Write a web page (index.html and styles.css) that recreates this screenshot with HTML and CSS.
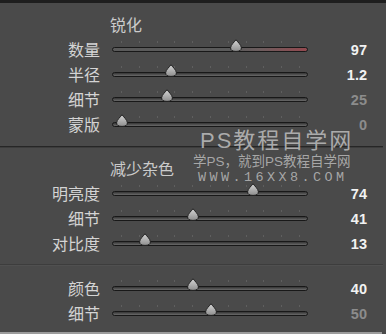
FILE: index.html
```html
<!DOCTYPE html>
<html lang="zh">
<head>
<meta charset="utf-8">
<title>Detail</title>
<link rel="stylesheet" href="styles.css">
</head>
<body>
<div class="panel">
  <div class="topbar"></div>

  <section class="group group-sharpen">
    <div class="heading">锐化</div>
    <div class="row">
      <span class="label">数量</span>
      <div class="track track-red"><svg class="thumb" style="left:63.3%" viewBox="0 0 12 13"><use href="#knob"/></svg></div>
      <span class="value">97</span>
    </div>
    <div class="row">
      <span class="label">半径</span>
      <div class="track"><svg class="thumb" style="left:30.1%" viewBox="0 0 12 13"><use href="#knob"/></svg></div>
      <span class="value">1.2</span>
    </div>
    <div class="row">
      <span class="label">细节</span>
      <div class="track"><svg class="thumb" style="left:27.6%" viewBox="0 0 12 13"><use href="#knob"/></svg></div>
      <span class="value dim">25</span>
    </div>
    <div class="row">
      <span class="label">蒙版</span>
      <div class="track"><svg class="thumb" style="left:4.6%" viewBox="0 0 12 13"><use href="#knob"/></svg></div>
      <span class="value dim">0</span>
    </div>
  </section>

  <div class="divider divider-strong"></div>

  <section class="group group-noise">
    <div class="heading">减少杂色</div>
    <div class="row">
      <span class="label">明亮度</span>
      <div class="track"><svg class="thumb" style="left:72.4%" viewBox="0 0 12 13"><use href="#knob"/></svg></div>
      <span class="value">74</span>
    </div>
    <div class="row">
      <span class="label">细节</span>
      <div class="track"><svg class="thumb" style="left:41.3%" viewBox="0 0 12 13"><use href="#knob"/></svg></div>
      <span class="value">41</span>
    </div>
    <div class="row">
      <span class="label">对比度</span>
      <div class="track"><svg class="thumb" style="left:16.3%" viewBox="0 0 12 13"><use href="#knob"/></svg></div>
      <span class="value">13</span>
    </div>
  </section>

  <div class="divider divider-soft"></div>

  <section class="group group-color">
    <div class="row">
      <span class="label">颜色</span>
      <div class="track"><svg class="thumb" style="left:41.3%" viewBox="0 0 12 13"><use href="#knob"/></svg></div>
      <span class="value">40</span>
    </div>
    <div class="row">
      <span class="label">细节</span>
      <div class="track"><svg class="thumb" style="left:50.5%" viewBox="0 0 12 13"><use href="#knob"/></svg></div>
      <span class="value dim">50</span>
    </div>
  </section>

  <div class="bottombar"></div>

  <div class="watermark">
    <div class="wm-title">PS教程自学网</div>
    <div class="wm-sub">学PS，就到PS教程自学网</div>
    <div class="wm-url">WWW.16XX8.COM</div>
  </div>

  <svg class="defs" width="0" height="0" aria-hidden="true">
    <defs>
      <linearGradient id="knobfill" x1="0" y1="0" x2="0" y2="1">
        <stop offset="0" stop-color="#d6d6d6"/>
        <stop offset="1" stop-color="#8e8e8e"/>
      </linearGradient>
      <path id="knob" d="M6 0.6 C7 2.6 11.4 5.8 11.4 8.8 C11.4 11.4 9.4 12.4 6 12.4 C2.6 12.4 0.6 11.4 0.6 8.8 C0.6 5.8 5 2.6 6 0.6 Z" fill="url(#knobfill)" stroke="#1c1c1c" stroke-width="1"/>
    </defs>
  </svg>
</div>
</body>
</html>
```

FILE: styles.css
```css
html, body {
  margin: 0;
  padding: 0;
  background: #4a4a4a;
}

.panel {
  position: relative;
  width: 386px;
  height: 334px;
  overflow: hidden;
  background: #4a4a4a;
  font-family: "Noto Sans CJK SC", "Noto Sans", sans-serif;
}

.topbar {
  height: 3px;
  background: #1e1e1e;
}

.group {
  display: flex;
  flex-direction: column;
}

.group-sharpen { padding: 8px 0 9px; }
.group-noise { padding: 7px 0 8px; }
.group-color { padding: 10px 0 6px; }

.heading {
  height: 26px;
  line-height: 26px;
  padding-left: 110px;
  font-size: 16px;
  color: #cbcbcb;
}

.row {
  display: flex;
  align-items: center;
  height: 25px;
}

.label {
  width: 100px;
  text-align: right;
  font-size: 16px;
  line-height: 25px;
  color: #d4d4d4;
}

.track {
  position: relative;
  margin-left: 12px;
  width: 194px;
  height: 3px;
  border: 1px solid #181818;
  border-radius: 3px;
  background: linear-gradient(#343434, #6a6a6a);
}

.track::before {
  content: "";
  position: absolute;
  left: 8px;
  top: -7px;
  width: 179px;
  height: 2px;
  background: repeating-linear-gradient(to right, #5f5f5f 0 1px, transparent 1px 17.8px);
}

.track-red {
  background: linear-gradient(to right, #5a5a5a 0, #5a5a5a 63%, #6c5c5d 76%, #93494f 100%);
}

.thumb {
  position: absolute;
  top: -9px;
  width: 12px;
  height: 13px;
  transform: translateX(-50%);
  overflow: visible;
}

.value {
  width: 59px;
  text-align: right;
  font-family: "Liberation Sans", Arial, sans-serif;
  font-weight: bold;
  font-size: 14.5px;
  color: #f2f2f2;
}

.value.dim {
  color: #8c8c8c;
}

.divider {
  width: 383px;
}

.divider-strong {
  height: 1px;
  background: #262626;
  border-bottom: 1px solid #3c3c3c;
}

.divider-soft {
  height: 1px;
  background: #3d3d3d;
  border-bottom: 1px solid #505050;
}

.bottombar {
  width: 382px;
  height: 3px;
  background: #9c9c9c;
}

.watermark {
  position: absolute;
  left: 193px;
  top: 128px;
  display: flex;
  flex-direction: column;
  pointer-events: none;
  font-family: "Liberation Sans", "Noto Sans CJK SC", sans-serif;
}

.wm-title {
  margin-left: 7px;
  font-size: 22px;
  line-height: 26px;
  letter-spacing: 2px;
  color: rgba(190, 190, 190, 0.85);
}

.wm-sub {
  font-size: 13.5px;
  line-height: 16px;
  color: rgba(185, 185, 185, 0.85);
}

.wm-url {
  margin-left: 5px;
  font-family: "Liberation Mono", monospace;
  font-size: 13.5px;
  line-height: 16px;
  letter-spacing: 3.4px;
  color: rgba(185, 185, 185, 0.85);
}

.defs {
  position: absolute;
  width: 0;
  height: 0;
}
```
